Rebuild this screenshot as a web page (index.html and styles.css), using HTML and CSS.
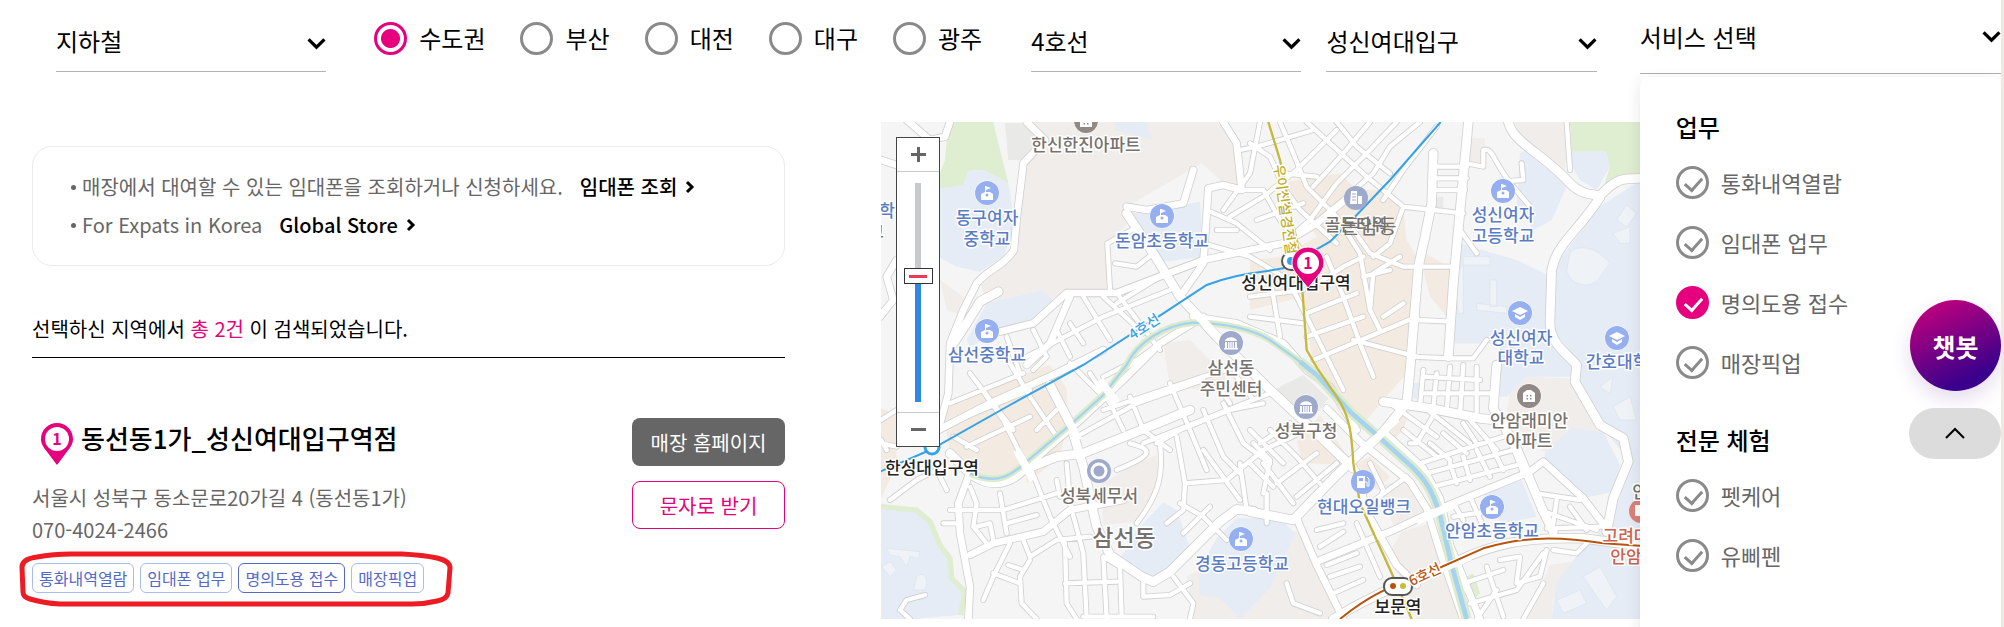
FILE: index.html
```html
<!DOCTYPE html>
<html lang="ko">
<head>
<meta charset="utf-8">
<title>매장 찾기</title>
<link rel="stylesheet" href="styles.css">
</head>
<body>
<svg class="sprite" aria-hidden="true">
  <symbol id="chev" viewBox="0 0 18 12"><path d="M1.500 2 9 9.500 16.500 2" fill="none" stroke="#000" stroke-width="3"/></symbol>
  <symbol id="arrow" viewBox="0 0 10 14"><path d="M2 3 7 8 2 13" fill="none" stroke="#000" stroke-width="3"/></symbol>
</svg>
<div class="page">
  <form class="filters">
    <div class="field">
      <select aria-label="검색 방법"><option>지하철</option></select>
      <svg class="chev"><use href="#chev"/></svg>
    </div>
    <div class="radios">
      <label><input type="radio" name="area" checked>수도권</label>
      <label><input type="radio" name="area">부산</label>
      <label><input type="radio" name="area">대전</label>
      <label><input type="radio" name="area">대구</label>
      <label><input type="radio" name="area">광주</label>
    </div>
    <div class="field">
      <select aria-label="호선"><option>4호선</option></select>
      <svg class="chev"><use href="#chev"/></svg>
    </div>
    <div class="field">
      <select aria-label="역"><option>성신여대입구</option></select>
      <svg class="chev"><use href="#chev"/></svg>
    </div>
    <div class="service">
      <button type="button" class="service-btn">서비스 선택<svg class="service-chev"><use href="#chev"/></svg></button>
      <div class="panel">
        <fieldset>
          <legend>업무</legend>
          <label><input type="checkbox">통화내역열람</label>
          <label><input type="checkbox">임대폰 업무</label>
          <label><input type="checkbox" checked>명의도용 접수</label>
          <label><input type="checkbox">매장픽업</label>
        </fieldset>
        <fieldset>
          <legend>전문 체험</legend>
          <label><input type="checkbox">펫케어</label>
          <label><input type="checkbox">유삐펜</label>
        </fieldset>
      </div>
    </div>
  </form>

  <main class="content">
    <section class="results">
      <ul class="notice">
        <li><span>매장에서 대여할 수 있는 임대폰을 조회하거나 신청하세요.</span><a href="#">임대폰 조회<svg class="arrow"><use href="#arrow"/></svg></a></li>
        <li><span>For Expats in Korea</span><a href="#">Global Store<svg class="arrow"><use href="#arrow"/></svg></a></li>
      </ul>
      <p class="count">선택하신 지역에서 <em>총 2건</em> 이 검색되었습니다.</p>
      <article class="store">
        <div class="info">
          <h2><svg class="pin" viewBox="0 0 32 42"><path d="M16 0C7 0 0 7 0 16c0 6 4 10 7 14l9 12 9-12c3-4 7-8 7-14C32 7 25 0 16 0Z" fill="#e6007e"/><circle cx="16" cy="16" r="12" fill="#fff"/><text x="16" y="22" class="pin-num">1</text></svg>동선동1가_성신여대입구역점</h2>
          <p>서울시 성북구 동소문로20가길 4 (동선동1가)</p>
          <p>070-4024-2466</p>
          <div class="tags">
            <span>통화내역열람</span><span>임대폰 업무</span><span class="on">명의도용 접수</span><span>매장픽업</span>
            <svg class="mark" viewBox="0 0 434 56"><path d="M3 16Q3 8 18 6 34 3 52 3H383Q404 4 418 7 431 10 431 17L429 42Q428 48 418 50 406 53 393 53H41Q24 52 11 48 4 46 4 41Z" fill="none" stroke="#ed1c24" stroke-width="5"/></svg>
          </div>
        </div>
        <div class="actions">
          <button type="button" class="solid">매장 홈페이지</button>
          <button type="button" class="line">문자로 받기</button>
        </div>
      </article>
    </section>

    <section class="map">
      <svg class="canvas" viewBox="881 122 1121 497" role="img" aria-label="성신여대입구역 주변 지도">
        <defs>
          <g id="school"><circle r="12.500" class="halo"/><circle r="12" fill="#95aff0"/><path d="M-1-7 4-5-1-3V-1h4l3 2v6H-6V1l4-2V-7Z" fill="#fff"/><circle cx="0" cy="2" r="1.500" fill="#95aff0"/></g>
          <g id="univ"><circle r="12.500" class="halo"/><circle r="12" fill="#95aff0"/><path d="M-8-2 0-6 8-2 0 2ZM-5 1 0 4 5 1V4L0 7-5 4Z" fill="#fff"/></g>
          <g id="gov"><circle r="12.500" class="halo"/><circle r="12" fill="#9fa9cb"/><path d="M-6-2C-5-7 5-7 6-2ZM-6-1h2v6h-2zM-3-1h1.500v6H-3zM1.500-1H3v6H1.500zM4-1h2v6H4zM-.7-1H.7v6H-.7zM-7 5H7v1.500H-7Z" fill="#fff"/></g>
          <g id="apt"><circle r="12.500" class="halo"/><circle r="12" fill="#918985"/><path d="M-6 6V-3L-2-6H2L6-3V6Z" fill="#fff"/><path d="M-2.500-1h1.500v1.500h-1.500zM1-1h1.500V.5H1zM-2.500 2h1.500v1.500h-1.500zM1 2h1.500v1.500H1z" fill="#918985"/></g>
          <g id="roads">
            <g class="r4">
              <path d="M770 310 850 430 930 560 1040 680 1190 830 1330 960 1450 1075"/>
              <path d="M1140 1205 1270 1230 1400 1095 1540 965 1610 880 1620 780 1645 470 1665 380 1685 280 1690 130"/>
              <path d="M1150 1203 1100 1198 1050 1235 900 1385 850 1415 815 1400 720 1335 680 1250 640 1070 600 940 540 825"/>
              <path d="M1795 36 1775 250 1750 520 1735 740"/>
              <path d="M1915 36C1930 100 2020 130 2100 220C2140 260 2170 250 2190 258C2240 200 2270 205 2320 205M2190 262C2120 370 2060 400 2045 480L2040 640C2040 700 2090 730 2120 765L2115 815 2190 945 2260 985 2275 1055 2230 1165 2210 1265"/>
              <path d="M1390 1527C1520 1445 1620 1415 1760 1355C1860 1305 1960 1280 2140 1285L2320 1310"/>
              <path d="M1540 875 1680 895 1830 925 1920 935"/>
              <path d="M1880 765 1870 895 1940 1015 2020 1205 2050 1265"/>
              <path d="M240 1030 300 1090C350 1130 410 1130 460 1080L560 1040 640 1030 800 965 960 900"/>
              <path d="M385 545 330 575 290 640 250 700"/>
            </g>
            <g class="r3">
              <path d="M470 36 525 90 460 160C450 260 440 300 432 420C400 470 350 480 320 520L280 600 240 700 235 850 205 960"/>
              <path d="M240 36 225 80 180 90 110 30M33 150 80 165M30 620 70 570 50 500 80 450"/>
              <path d="M390 665 490 640 590 549H740L1000 450 1140 420 1240 400 1340 340 1450 250"/>
              <path d="M1370 895 1470 995 1620 1115 1670 1195 1710 1325 1780 1527"/>
              <path d="M1540 965 1660 1075 1710 1165 1740 1305 1830 1527"/>
              <path d="M1340 1355 1560 1265 1700 1200 1980 1085 2020 1055 2140 1165 2210 1255"/>
              <path d="M1280 1225 1340 1365 1420 1527M1460 1085 1490 1205 1580 1365 1640 1425"/>
              <path d="M1060 36 1100 100 1115 240 1060 225 1015 235 1000 460 930 560"/>
              <path d="M205 960 360 880 560 790 700 720M480 1060 620 940 760 810 870 700 1000 620"/>
              <path d="M295 1100 265 1180 270 1270 300 1430 295 1527M300 1335 370 1300 520 1265 600 1200 760 1170"/>
              <path d="M470 765 540 700 600 560M770 290 830 300 940 280 970 180"/>
              <path d="M970 620 1100 640 1240 700 1310 780 1380 830 1460 960"/>
            </g>
            <g class="r2">
              <path d="M720 540 712 400 785 360M735 460 800 470 850 430M740 580 870 500 1000 450M640 560 720 690M740 549 870 720M700 560 820 670M490 660 530 740 490 780M560 660 600 740M600 640 640 700M410 680 450 790M470 740 700 620 900 540"/>
              <path d="M1010 300 1100 340 1200 420M1060 300 1140 190 1170 36M1080 320 1180 260 1280 180 1400 60M1040 360 1100 360M1000 400 1140 440 1240 500M1115 240 1180 240 1230 330 1300 430M1110 120 1160 110 1230 90 1330 60"/>
              <path d="M1140 100 1200 140 1240 230 1290 300 1400 400M1230 36 1270 130 1310 230 1400 320 1470 430 1500 600M1310 36 1380 100 1490 200 1600 290M1400 36 1460 110 1560 190M1500 36 1420 130 1330 230M1580 36 1500 120 1400 220 1320 330 1240 400M1650 36 1560 110 1510 190 1430 260M1700 50 1600 180 1540 270M1240 190 1340 200M1160 330 1300 280M1600 290 1560 400 1510 440"/>
              <path d="M1600 290 1690 300 1780 310M1690 170H1790M1690 205H1790M1690 240H1785M1645 470 1760 470M1640 630 1745 635M1620 740 1740 745 1810 745 1850 690"/>
              <path d="M1480 440 1420 470 1330 530M1590 440 1510 490 1500 600 1530 660M1450 360 1500 430 1600 470 1640 470M1540 620 1600 580M1310 610 1460 550M1310 680 1480 620M1330 750 1640 620M1370 440 1420 560 1470 700 1510 800M1260 520 1370 740 1420 840M1480 500 1560 480M1140 560 1300 540M1140 620 1300 640M1200 500 1230 680M1450 690 1640 740"/>
              <path d="M1790 160 1840 170 1840 120C1870 110 1870 160 1930 230L1980 290M1890 215 1960 210 1955 160M2090 36 2100 180M1770 360 1820 430"/>
              <path d="M240 880 460 790M240 940 480 840M330 830 400 930 470 1070M420 760 480 860 560 980M300 790 430 960M290 1010 480 920M500 960 560 900M250 980 320 1020M620 980 800 880 1000 810M660 790 720 880 760 960M700 900 1000 800 1140 760M820 1000 1200 850M780 860 820 960 900 1020M900 820 960 960 1010 1080M1000 900 1060 1040 1110 1090M1060 880 1120 1000 1200 1060M1040 820 1080 880M1100 800 1150 870M600 760 700 860M760 780 870 700M700 800 820 740"/>
              <path d="M860 1000 930 960 1080 900 1180 880M870 1000C880 1090 870 1150 800 1240M780 1000C860 1020 840 1040 740 1080M920 980 945 1120 940 1200 890 1240M945 1120 1070 1110 1180 1020 1310 960M1110 1060 1130 1200M1000 1020 1110 1170M930 1180 1000 1220 1070 1290M940 1270 1020 1190M1180 1060 1270 1180M1200 960 1280 1040 1350 1120M1150 1000 1200 1050 1180 1150M1220 1120 1340 1030M1280 1160 1400 1060M1170 1000 1260 940"/>
              <path d="M390 1150 410 1270M400 1200 560 1150M240 1200 390 1200M220 1240H270M300 1130 320 1180 310 1250 350 1300M320 1250 360 1240 370 1290M410 1240 500 1215M480 1070 540 1220 600 1340M590 1060 600 1180 640 1330 650 1527M585 1300 590 1480 620 1527M700 1340 710 1527M560 1110 570 1160M480 1340 560 1290 660 1280M480 1350 450 1400 455 1480 500 1527M420 1300 370 1400 340 1470M370 1390 450 1420M415 1365 460 1380M585 1420 740 1415M700 1340 750 1370 755 1520M640 1520H850M820 1400V1460L900 1455 960 1420M910 1400 970 1480 960 1527M460 1290 480 1340M60 1170 140 1110 200 1080 230 1140M90 1500 110 1470 165 1455M90 1500 120 1527M33 930 80 900M33 1000 80 1010M33 990 50 1020"/>
              <path d="M1140 1060 1210 1130M1140 960 1240 1060M1190 1240 1190 1150M1340 1260 1420 1240M1350 1310 1420 1265M1370 1365 1460 1330M1380 1400 1470 1370M1390 1450 1480 1410M1460 1240 1530 1400M1500 1060 1540 1140 1520 1190M1500 1180 1610 1100M1250 1420 1270 1480 1350 1510"/>
              <path d="M1660 780 1650 890M1700 790 1690 895M1740 770 1730 905M1780 765 1770 915M1820 770 1820 920M1660 800 1830 810M1660 850 1860 850M1660 890 1800 1000M1700 900 1640 1000 1620 1000M1560 880 1700 980M1800 930 1880 1020M1780 940 1820 1000M1650 1060 1900 980M1670 1090 1930 1020M1690 1130 1960 1060M1740 1060 1760 1120M1780 1040 1800 1110M1820 1020 1860 1100M1860 1000 1900 1080M1900 940 1960 1090M1680 1000 1740 1050M1720 970 1790 1030M1600 960 1700 1040"/>
              <path d="M1750 1180 1780 1230M1800 1160 1840 1250M1750 1220 1880 1200M2000 1150 2130 1170M2010 1200 2180 1260M2060 1170 2050 1240M2100 1190 2150 1260M2030 1255 2200 1250M1890 1350 1950 1340 1940 1420 2010 1400 2030 1320M1780 1420 1900 1380M1800 1480 1940 1440 2020 1330M1820 1527 1880 1440M1750 1370 1800 1460M1850 1370 1900 1520M2020 1420 1960 1527M2050 1320 2120 1330 2150 1300"/>
            </g>
          </g>
        </defs>
        <rect x="881" y="122" width="1121" height="497" fill="#f5f5f5"/>
        <g transform="translate(870 110) scale(.33333)">
          <g class="pink">
            <path d="M470 36H1040L1100 90 1130 240 1100 250 1050 210 995 160 770 290 790 320 720 400 710 540 590 545 540 570 515 540 350 580 330 520 430 430 450 300 460 160 525 90Z"/>
            <path d="M690 1125 790 1065 860 1035 865 1135 800 1235 700 1245ZM1270 1265 1310 1260 1410 1527H1100L1200 1435ZM985 1380 1050 1460 1110 1527H970L950 1400ZM1935 36H2100L2085 180 2020 130 1950 90ZM1800 85H1845V165H1795ZM1920 845 1970 800 2100 805 2200 965 2090 955 2070 1030 2020 1025 1910 925ZM1595 1265 1690 1235 1730 1420 1780 1527H1640L1560 1325ZM1520 1125 1610 1115 1690 1195 1570 1245ZM2040 1365 2105 1355 2100 1415 2050 1465 2045 1527H1970ZM880 700 960 690 1050 780 1100 850 900 830ZM210 510 280 560 290 620 230 600Z"/>
          </g>
          <g class="peach">
            <path d="M1250 215 1410 190 1460 240 1540 240 1600 290 1610 390 1640 440 1630 640 1620 780 1540 870 1470 955 1380 845 1330 780 1300 560 1140 600V450L1240 440 1340 380 1290 300ZM1645 420 1740 470 1740 630 1680 560Z"/>
            <path d="M215 880 330 840 540 765 590 835 595 935 575 1015 540 1065 470 1120 460 1065 350 1110 240 1025ZM33 895 80 915V1065L33 1165ZM1280 995 1350 915 1450 1065 1300 1060ZM1460 1060 1500 1040 1560 1100 1520 1140ZM1560 930 1620 900 1600 960 1570 990Z"/>
          </g>
          <path fill="#e9e9e8" d="M405 40H480L525 85 460 150 415 150ZM1200 845 1300 795 1375 865 1330 925 1260 915ZM1685 260H1720V295H1685Z"/>
          <g class="green"><path d="M235 36H370L380 80 415 220 340 180 295 183 280 225 190 240 225 150ZM2100 36H2320V190L2200 235 2220 170 2205 125 2105 125ZM1790 1400 1810 1390 1830 1450 1810 1470Z"/></g>
          <g class="blue">
            <path d="M210 235 280 225 295 183 340 180 415 220 425 280 430 360 400 440 330 485 260 470 205 440ZM735 36H830L845 88 735 60ZM785 310 990 275 1000 440 880 455 840 400ZM350 580 515 540 548 570 490 640 400 660 300 710 290 690ZM33 1190 140 1200 180 1235 210 1305 240 1345 245 1405 290 1445 270 1515 130 1527H33Z"/>
            <path d="M805 1255 880 1177 920 1200 962 1320 900 1395 830 1400 750 1345ZM985 1385 1040 1285 1100 1225 1230 1225 1275 1270 1200 1435 1110 1527 1090 1505 1050 1465 990 1455ZM1950 130 1970 120 2090 230 2045 330 1990 360 1940 280ZM2105 125H2210L2220 170 2180 240 2130 210 2100 160Z"/>
            <path d="M2190 290 2320 205V1527H2045L2060 1415 2130 1325 2190 1265 2250 1165 2270 1045 2200 955 2110 780 2040 700 2060 460ZM1770 400 1940 450 2045 500 2045 700 2110 780 2100 800 1970 800 1910 860H1890V700H1740ZM2025 1030 2100 955 2200 965 2250 1065 2230 1145 2140 1165 2020 1065ZM1840 1155 1955 1110 2000 1220 1900 1240 1860 1205ZM1630 820 1665 815 1660 870 1630 865Z"/>
          </g>
          <g class="campus">
            <path d="M2100 430C2120 400 2180 410 2220 460L2190 500C2170 540 2100 530 2090 480ZM2240 330 2270 285 2300 310 2270 350ZM2230 370 2280 350 2280 400 2250 400ZM1780 440H1860V465H1780ZM1820 580 1910 590V610L1820 600ZM1860 510H1880V590H1860ZM1750 470H1780V610H1765ZM2190 830 2230 800 2220 850ZM2230 890 2280 860 2300 930 2250 930ZM2060 1470 2130 1440 2150 1480 2080 1510ZM2140 1400 2190 1370 2240 1460 2210 1500 2160 1430ZM50 1315 150 1325 145 1345 120 1340 110 1370 90 1340 60 1335ZM35 1370 60 1355 80 1380 60 1400ZM140 1400C160 1380 180 1410 165 1440L130 1440Z"/>
          </g>
          <path class="park" d="M33 1190 140 1200 180 1235 210 1305 240 1345 245 1405 285 1445 272 1515"/>
          <use href="#roads" class="case"/>
          <use href="#roads" class="fill"/>
          <path class="bank" d="M300 1090C380 1125 420 1100 470 1055L600 945 700 855 770 765C800 700 880 645 970 638C1080 640 1150 660 1200 690L1290 755"/>
          <path class="bank wide" d="M1290 755 1340 795 1440 905 1520 975 1620 1065C1670 1110 1690 1150 1710 1215L1745 1365 1790 1527"/>
          <path class="water" d="M300 1090C380 1125 420 1100 470 1055L600 945 700 855 770 765C800 700 880 645 970 638C1080 640 1150 660 1200 690L1290 755"/>
          <path class="water wide" d="M1290 755 1340 795 1440 905 1520 975 1620 1065C1670 1110 1690 1150 1710 1215L1745 1365 1790 1527"/>
          <path class="bridge" d="M930 560 1100 740M1500 1005 1580 925M1640 1233 1760 1180M1660 1400 1800 1340M440 1020 490 1110M580 900 625 990M690 810 740 880"/>
          <path class="l4" d="M30 1085 180 1020 420 885 640 765 880 610 1010 525C1100 490 1160 490 1240 475L1380 395 1460 315 1560 210 1712 36"/>
          <path class="ui" d="M1195 36 1230 150 1290 440 1310 720 1345 780 1400 860C1440 920 1445 970 1450 1060L1470 1180 1570 1400 1625 1527"/>
          <path class="l6" d="M1410 1527C1530 1430 1600 1420 1660 1395L1840 1315C1940 1285 2040 1275 2200 1300L2320 1308"/>
        </g>
        <circle cx="932" cy="447" r="7" fill="#fff" stroke="#35a1e6" stroke-width="3"/>
        <rect x="1282" y="252" width="30" height="18" rx="9" class="stn"/><circle cx="1291" cy="261" r="4" fill="#35a1e6"/>
        <rect x="1384" y="578" width="28" height="17" rx="8" class="stn"/><circle cx="1393" cy="586" r="3" fill="#b8530e"/><circle cx="1403" cy="586" r="3" fill="#c9b93c"/>

        <use href="#school" x="987" y="193"/><use href="#school" x="1162" y="216"/><use href="#school" x="987" y="331"/><use href="#school" x="1503" y="191"/><use href="#school" x="1241" y="539"/><use href="#school" x="1492" y="507"/>
        <use href="#univ" x="1520" y="313"/><use href="#univ" x="1617" y="338"/>
        <use href="#gov" x="1231" y="343"/><use href="#gov" x="1306" y="407"/>
        <use href="#apt" x="1086" y="121"/><use href="#apt" x="1529" y="396"/>
        <circle cx="1356" cy="198" r="12" fill="#9fa9cb"/><path fill="#fff" d="M1351 191h6v13h-7zM1358 196h4v8h-4z"/><path stroke="#9fa9cb" d="M1352 194h4M1352 197h4M1352 200h4"/>
        <circle cx="1363" cy="482" r="12" fill="#95aff0"/><path fill="#fff" d="M1357 476h8v12h-8z"/><path fill="#95aff0" d="M1359 478h4v3h-4z"/><path d="M1365 482h2v4h2v-7l-2-2" fill="none" stroke="#fff" stroke-width="1"/>
        <circle cx="1099" cy="471" r="12" fill="#9fa9cb"/><circle cx="1099" cy="471" r="7" fill="#9fa9cb" stroke="#fff" stroke-width="3"/>
        <circle cx="1641" cy="511" r="12" fill="#dd817a"/><path fill="#fff" d="M1635 505h10v11h-10z"/>

        <g class="t school-t">
          <text x="987" y="224">동구여자</text><text x="987" y="245">중학교</text>
          <text x="1162" y="247">돈암초등학교</text><text x="987" y="361">삼선중학교</text>
          <text x="1503" y="221">성신여자</text><text x="1503" y="242">고등학교</text>
          <text x="1521" y="344">성신여자</text><text x="1521" y="364">대학교</text>
          <text x="1617" y="368">간호대학</text><text x="1242" y="570">경동고등학교</text>
          <text x="1364" y="513">현대오일뱅크</text><text x="1492" y="537">안암초등학교</text>
          <text x="895" y="217">학부</text><text x="876" y="238">교</text>
        </g>
        <g class="t gray-t">
          <text x="1086" y="151">한신한진아파트</text>
          <text x="1231" y="374">삼선동</text><text x="1231" y="395">주민센터</text>
          <text x="1356" y="231">골든타워</text><text x="1099" y="502">성북세무서</text>
          <text x="1306" y="437">성북구청</text>
          <text x="1529" y="427">안암래미안</text><text x="1529" y="447">아파트</text>
          <text x="1640" y="498">안</text>
          <text x="1124" y="546" class="dong">삼선동</text>
          <text x="1369" y="234" class="dong2">돈암동</text>
        </g>
        <g class="t black-t">
          <text x="1296" y="289">성신여대입구역</text><text x="932" y="474">한성대입구역</text><text x="1398" y="613">보문역</text>
        </g>
        <g class="t red-t"><text x="1626" y="542">고려대</text><text x="1626" y="563">안암</text></g>
        <g class="t line-t">
          <text transform="translate(1147 331) rotate(-33)" fill="#35a1e6">4호선</text>
          <text transform="translate(1427 579) rotate(-25)" fill="#b8530e">6호선</text>
          <text transform="translate(1280 210) rotate(82)" fill="#bfae2c">우이신설경전철</text>
        </g>
        <g transform="translate(1292 247)"><path d="M16 0C7 0 0 7 0 16c0 6 4 10 7 14l9 11 9-11c3-4 7-8 7-14C32 7 25 0 16 0Z" fill="#e6007e" stroke="#fff" stroke-width="1"/><circle cx="16" cy="16" r="11" fill="#fff"/><text x="16" y="22" class="pin-num">1</text></g>
      </svg>
      <div class="zoom">
        <button type="button" aria-label="확대" class="plus"></button>
        <input type="range" min="0" max="100" value="58" aria-label="지도 배율">
        <button type="button" aria-label="축소" class="minus"></button>
      </div>
    </section>
  </main>
  <button type="button" class="chat">챗봇</button>
  <button type="button" class="top" aria-label="맨 위로"><svg viewBox="0 0 20 12"><path d="M1 11 10 2 19 11" fill="none" stroke="#000" stroke-width="2"/></svg></button>
</div>
</body>
</html>
```
FILE: styles.css
```css
* { box-sizing: border-box; }
body {
  margin: 0;
  background: #fff;
  color: #000;
  font-family: "Noto Sans CJK KR", sans-serif;
  font-size: 20px;
}
button, select, input { font-family: inherit; margin: 0; }
.sprite { position: absolute; width: 0; height: 0; }
.pin-num { font-size: 16px; font-weight: 700; text-anchor: middle; fill: #e6007e; }
.page {
  position: relative;
  min-height: 100vh;
  overflow: hidden;
  border-right: 3px solid #f0e9dc;
}

/* filters */
.filters {
  display: grid;
  grid-template-columns: 270fr auto 270fr 295fr 404fr;
  padding-left: 56px;
  height: 74px;
}
.field { position: relative; height: 72px; }
.field select {
  width: 100%;
  height: 72px;
  padding: 10px 24px 0 0;
  border: 0;
  border-bottom: 1px solid #b4b4b4;
  background: transparent;
  appearance: none;
  font-size: 24px;
  color: #000;
}
.chev { position: absolute; right: 0; top: 37px; width: 19px; height: 13px; pointer-events: none; }
.radios { display: flex; gap: 35px; padding: 0 49px 0 48px; height: 76px; align-items: center; }
.radios label { display: flex; align-items: center; gap: 12px; font-size: 24px; line-height: 34px; white-space: nowrap; }
.radios input {
  appearance: none;
  width: 33px;
  height: 33px;
  border: 3px solid #8a8a8a;
  border-radius: 50%;
}
.radios input:checked { border-color: #e6007e; background: radial-gradient(circle, #e6007e 9px, #fff 10px); }
.field + .field { margin-left: 25px; }
.service { position: relative; margin-left: 43px; z-index: 2; }
.service-btn {
  display: flex;
  justify-content: space-between;
  align-items: center;
  width: 100%;
  height: 74px;
  padding: 0;
  border: 0;
  border-bottom: 1px solid #b0b0b0;
  background: none;
  font-size: 24px;
  color: #000;
}
.service-chev { width: 19px; height: 13px; }
.panel {
  position: absolute;
  top: 77px;
  left: 0;
  right: 0;
  padding: 32px 36px 64px;
  border-radius: 8px;
  background: #fff;
  box-shadow: 0 4px 16px rgba(0, 0, 0, .1);
}
.panel fieldset { margin: 0 0 30px; padding: 0; border: 0; }
.panel legend { padding: 0; font-size: 24px; font-weight: 500; line-height: 36px; margin-bottom: 7px; }
.panel label { display: flex; align-items: center; gap: 12px; height: 60px; font-size: 22px; color: #666; }
.panel input {
  position: relative;
  appearance: none;
  width: 33px;
  height: 33px;
  border: 3px solid #8a8a8a;
  border-radius: 50%;
}
.panel input::after {
  content: "";
  position: absolute;
  left: 9px;
  top: 5px;
  width: 8px;
  height: 14px;
  border: solid #8a8a8a;
  border-width: 0 3px 3px 0;
  transform: rotate(42deg);
}
.panel input:checked { background: #e6007e; border-color: #e6007e; }
.panel input:checked::after { border-color: #fff; }

/* results */
.content {
  display: grid;
  grid-template-columns: 753fr 1121fr;
  gap: 96px;
  align-items: start;
  padding: 48px 0 8px 32px;
  margin-right: -1px;
}
.results { padding-top: 24px; }
.notice {
  margin: 0;
  padding: 20px 38px 22px;
  list-style: none;
  border: 1px solid #ebebeb;
  border-radius: 20px;
}
.notice li { display: flex; align-items: center; height: 38px; color: #666; }
.notice li::before { content: ""; width: 5px; height: 5px; margin: 2px 6px 0 0; border-radius: 50%; background: #666; }
.notice a { display: flex; align-items: center; gap: 8px; margin-left: 17px; color: #000; font-weight: 500; text-decoration: none; }
.arrow { width: 10px; height: 16px; }
.count { margin: 0; padding: 46px 0 11px; line-height: 34px; border-bottom: 1px solid #000; }
.count em { font-style: normal; color: #e6007e; }
.store { display: flex; justify-content: space-between; padding-top: 60px; }
.info h2 { display: flex; align-items: flex-end; gap: 8px; margin: 0 0 17px; padding-left: 9px; height: 47px; font-size: 26px; font-weight: 500; line-height: 54px; }
.pin { width: 32px; height: 42px; }
.info p { margin: 0; line-height: 32px; color: #666; }
.tags { position: relative; display: flex; gap: 6px; margin-top: 17px; width: max-content; }
.tags span { padding: 0 6px; border: 1px solid #aabdf0; border-radius: 6px; font-size: 16px; line-height: 28px; color: #5468c7; }
.tags .on { border-color: #5468c7; }
.mark { position: absolute; left: -13px; top: -12px; width: 434px; height: 56px; }
.actions { display: flex; flex-direction: column; gap: 15px; width: 153px; }
.actions button { height: 48px; padding: 0; border-radius: 8px; font-size: 20px; }
.solid { border: 0; background: #666; color: #fff; }
.line { border: 1px solid #e6007e; background: #fff; color: #e6007e; }

/* map */
.map { position: relative; }
.canvas { display: block; width: 100%; }
.halo { fill: #fff; }
.pink { fill: #f1edeb; }
.peach { fill: #f3ebe2; }
.green { fill: #dfedd0; }
.blue { fill: #e5ecf5; }
.campus { fill: #eff3f8; stroke: #dbe3ec; stroke-width: 2px; }
.park { fill: none; stroke: #dfedd0; stroke-width: 16px; }
.bank { fill: none; stroke: #dcebcb; stroke-width: 20px; }
.bank.wide { stroke-width: 30px; }
.water { fill: none; stroke: #a5d3f0; stroke-width: 7px; }
.water.wide { stroke-width: 14px; }
.bridge { fill: none; stroke: #fff; stroke-width: 24px; }
.case, .fill { fill: none; stroke-linecap: round; stroke-linejoin: round; }
.case { stroke: #d0d0d0; --e: 5px; }
.fill { stroke: #fff; --e: 0px; }
.r4 { stroke-width: calc(26px + var(--e)); }
.r3 { stroke-width: calc(20px + var(--e)); }
.r2 { stroke-width: calc(13px + var(--e)); }
.l4, .ui, .l6 { fill: none; stroke-width: 6px; }
.l4 { stroke: #35a1e6; }
.ui { stroke: #c5b83c; stroke-width: 7px; }
.l6 { stroke: #b8530e; }
.stn { fill: #fff; stroke: #555; stroke-width: 2px; }
.t { font-size: 17px; font-weight: 500; text-anchor: middle; paint-order: stroke; stroke: #fff; stroke-width: 3px; stroke-linejoin: round; }
.school-t { fill: #5b7cc4; }
.gray-t { fill: #77716e; }
.black-t { fill: #222; }
.red-t { fill: #cd6250; }
.line-t { font-size: 14px; }
.dong { font-size: 23px; }
.dong2 { font-size: 20px; font-weight: 400; stroke: none; }
.zoom {
  position: absolute;
  left: 15px;
  top: 15px;
  display: flex;
  flex-direction: column;
  align-items: center;
  width: 44px;
  border: 1px solid #444;
  background: #fff;
}
.zoom button {
  width: 100%;
  height: 34px;
  padding: 0;
  border: 0;
  background: linear-gradient(#666, #666) center / 15px 3px no-repeat;
}
.zoom .plus { border-bottom: 1px solid #ccc; background: linear-gradient(#666, #666) center / 15px 3px no-repeat, linear-gradient(#666, #666) center / 3px 15px no-repeat; }
.zoom .minus { border-top: 1px solid #ccc; }
.zoom input {
  appearance: none;
  writing-mode: vertical-lr;
  direction: rtl;
  width: 29px;
  height: 219px;
  margin: 11px 0 10px;
  background: linear-gradient(#c8cacc 42%, #2f87e6 42%) center / 6px 100% no-repeat;
}
.zoom input::-webkit-slider-thumb {
  appearance: none;
  width: 29px;
  height: 16px;
  border: 1px solid #333;
  background: linear-gradient(#ea3a5c, #ea3a5c) center / 18px 3px no-repeat, #fff;
}

/* floating buttons */
.chat {
  position: absolute;
  z-index: 3;
  right: 0;
  top: 300px;
  width: 91px;
  height: 91px;
  padding: 0;
  border: 0;
  border-radius: 50%;
  background: linear-gradient(155deg, #b9007e 12%, #3a008c 80%);
  box-shadow: 0 8px 20px rgba(80, 0, 140, .15);
  color: #fff;
  font-size: 25px;
  font-weight: 700;
}
.top {
  position: absolute;
  z-index: 3;
  right: 0;
  top: 408px;
  width: 92px;
  height: 51px;
  padding: 0;
  border: 0;
  border-radius: 26px;
  background: #dcdcdc;
}
.top svg { width: 20px; height: 12px; }
```
